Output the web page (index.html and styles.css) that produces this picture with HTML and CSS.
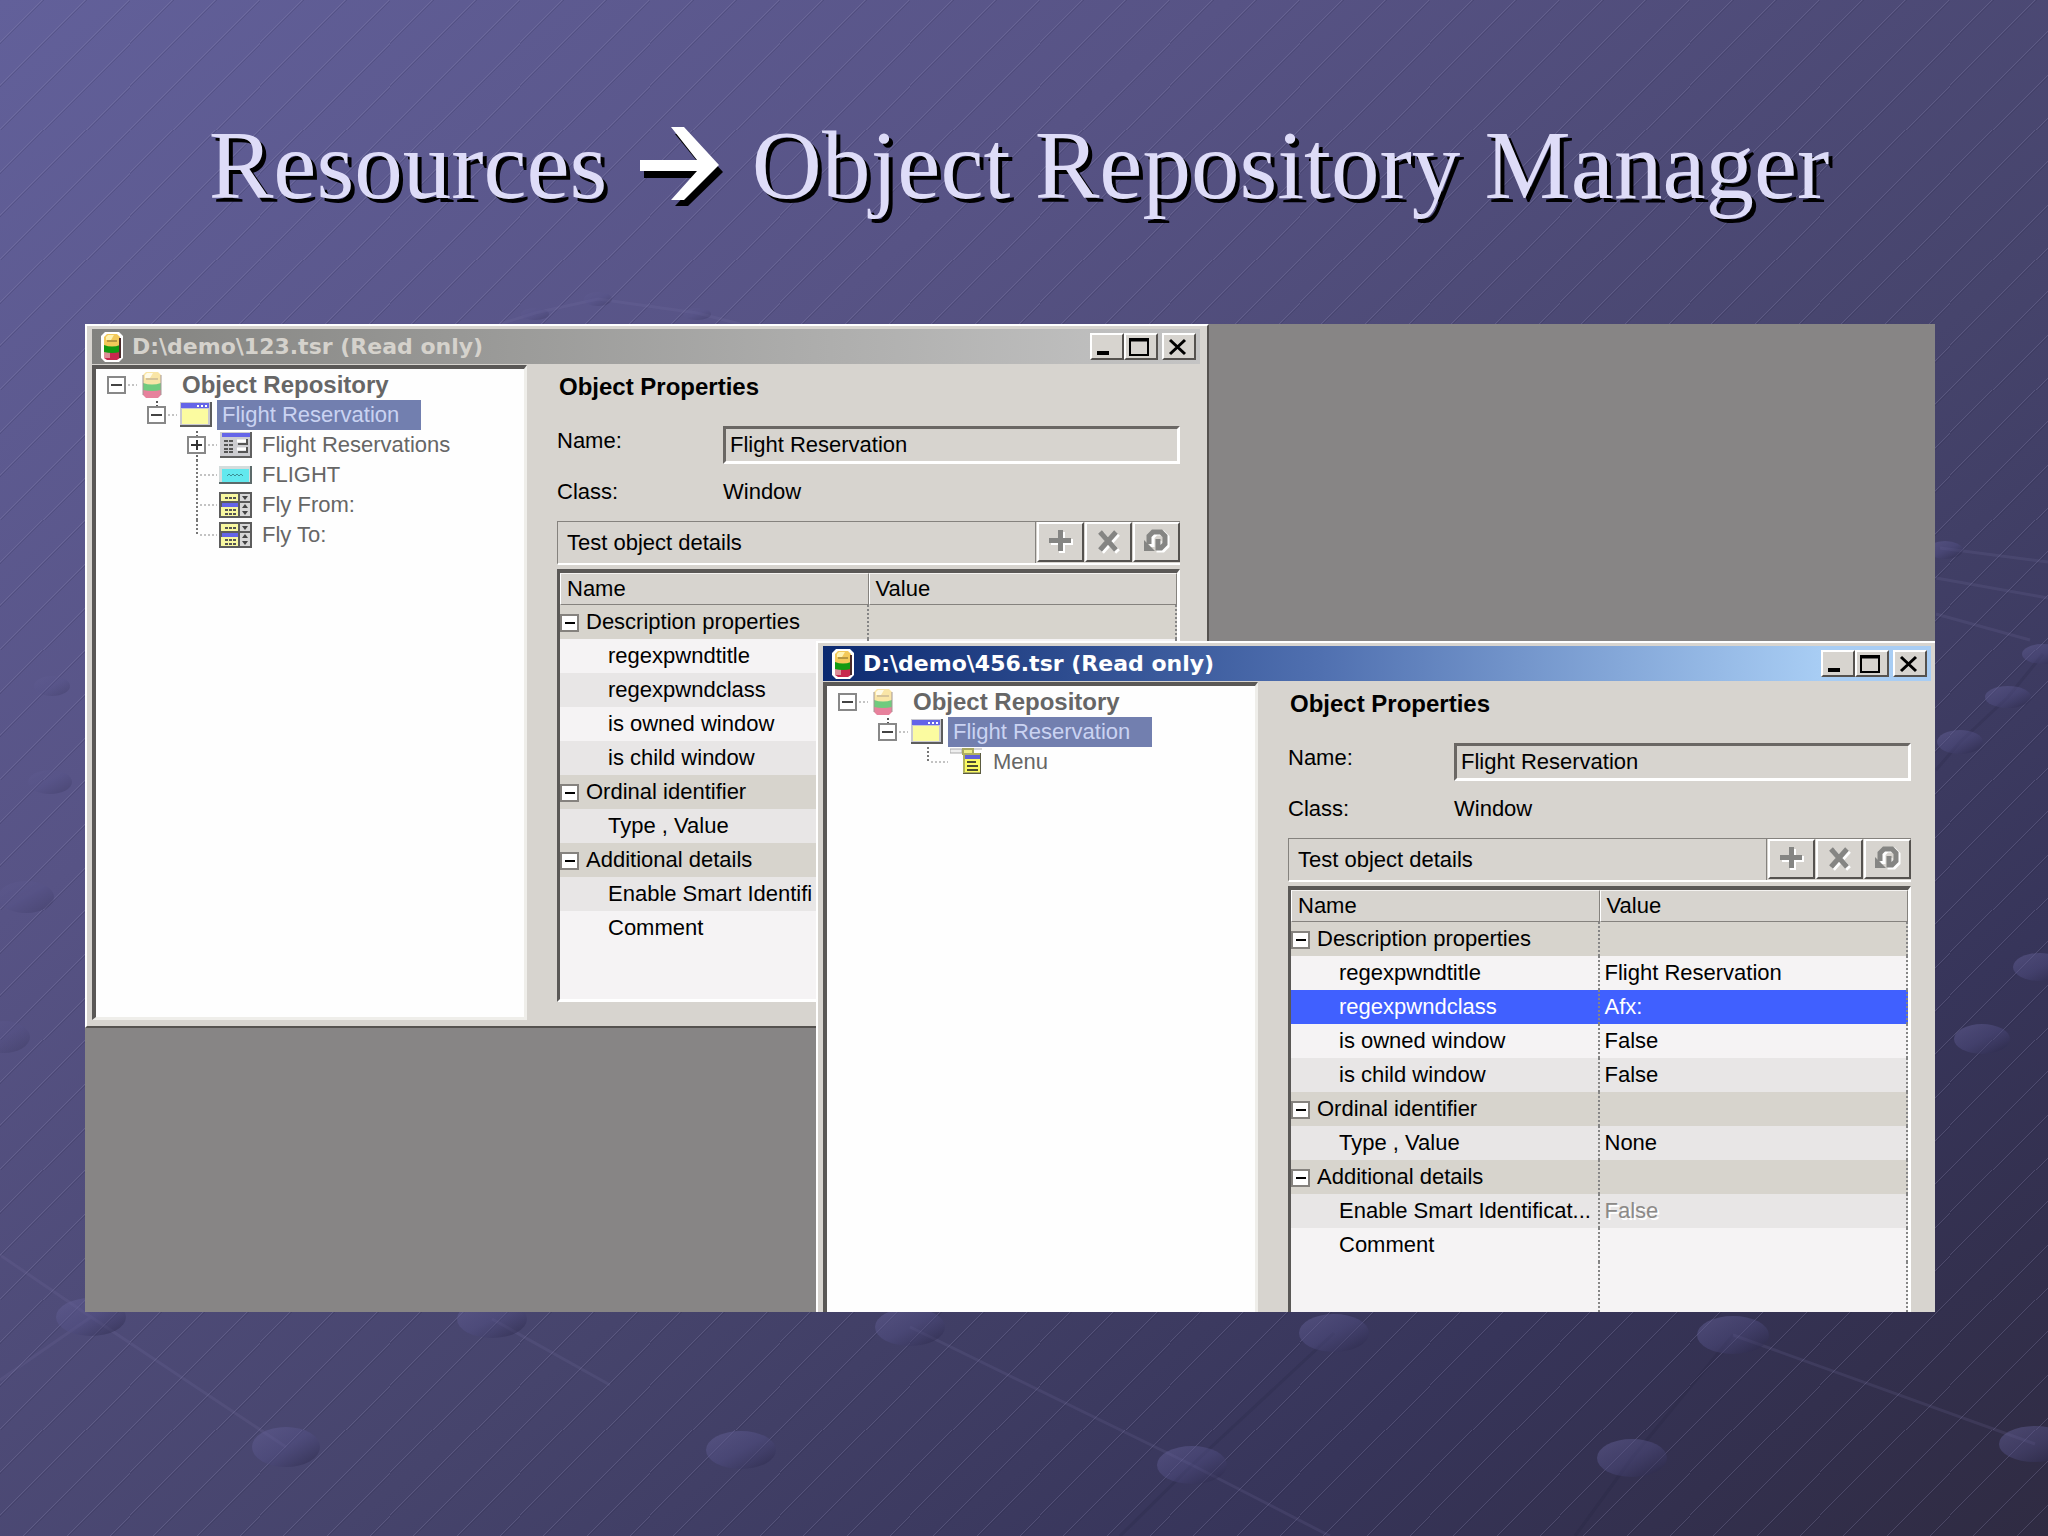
FILE: index.html
```
<!DOCTYPE html>
<html lang="en">
<head>
<meta charset="utf-8">
<title>Resources: Object Repository Manager</title>
<link rel="stylesheet" href="styles.css">
</head>
<body>
<svg class="backdrop" viewBox="0 0 2048 1536" preserveAspectRatio="xMidYMid slice" aria-hidden="true">
  <defs>
    <pattern id="hatch" width="130" height="130" patternUnits="userSpaceOnUse">
      <path d="M-1 43L43 -1M-1 86L86 -1M-1 130L130 -1M42 131L131 42M85 131L131 85M128 131L131 128" stroke="#8f8bb4" stroke-opacity=".28" fill="none"/>
      <path d="M-1 45L45 -1M-1 88L88 -1M1 130L130 1M44 131L131 44M87 131L131 87" stroke="#1c1a38" stroke-opacity=".15" fill="none"/>
    </pattern>
    <linearGradient id="ball" x1="0" y1="0" x2="1" y2="1">
      <stop offset="0" stop-color="#6a669c" stop-opacity=".5"/>
      <stop offset=".5" stop-color="#55528a" stop-opacity=".4"/>
      <stop offset="1" stop-color="#1f1d38" stop-opacity=".5"/>
    </linearGradient>
  </defs>
  <rect width="2048" height="1536" fill="url(#hatch)"/>
  <g stroke="#7a76a8" stroke-opacity=".16" stroke-width="3" fill="none">
    <path d="M0 1255L91 1317L286 1447M91 1317L0 1380M910 1327L1192 1465L1330 1536M492 1319L610 1385M1733 1335L2035 1444M500 324L535 313L598 299L697 313L740 324M1940 548L2048 562M1936 578L2048 598M1936 614L2030 640"/>
    <path d="M1334 1333L1192 1465L1120 1536M1733 1335L1632 1458L1575 1536M2043 654L2008 697L1960 742L1936 770" stroke="#1f1d38"/>
  </g>
  <g fill="url(#ball)">
    <ellipse cx="91" cy="1317" rx="35" ry="19"/><ellipse cx="492" cy="1319" rx="35" ry="19"/>
    <ellipse cx="910" cy="1327" rx="35" ry="19"/><ellipse cx="1334" cy="1333" rx="35" ry="19"/>
    <ellipse cx="1733" cy="1335" rx="36" ry="19"/><ellipse cx="286" cy="1447" rx="34" ry="20"/>
    <ellipse cx="741" cy="1450" rx="35" ry="19"/><ellipse cx="1192" cy="1465" rx="35" ry="19"/>
    <ellipse cx="1632" cy="1458" rx="35" ry="19"/><ellipse cx="2035" cy="1444" rx="36" ry="18"/>
    <ellipse cx="1982" cy="1039" rx="28" ry="15"/><ellipse cx="2040" cy="967" rx="27" ry="14"/>
    <ellipse cx="1960" cy="742" rx="23" ry="12"/><ellipse cx="2008" cy="697" rx="23" ry="11"/>
    <ellipse cx="2043" cy="654" rx="21" ry="10"/><ellipse cx="1945" cy="550" rx="18" ry="9"/>
    <g opacity=".5">
      <ellipse cx="4" cy="1037" rx="26" ry="16"/><ellipse cx="26" cy="897" rx="28" ry="16"/>
      <ellipse cx="50" cy="782" rx="22" ry="12"/><ellipse cx="52" cy="686" rx="18" ry="10"/>
      <ellipse cx="598" cy="299" rx="14" ry="7"/><ellipse cx="535" cy="314" rx="14" ry="6"/><ellipse cx="697" cy="314" rx="14" ry="6"/>
    </g>
  </g>
</svg>

<svg class="sprite" aria-hidden="true">
  <symbol id="db" viewBox="0 0 24 30">
    <path d="M5 0H19L23 4V26L19 30H5L1 26V4Z" fill="#fff"/>
    <path d="M4 18H20V26L17 28H7L4 26Z" fill="#c8284f"/><path d="M4 20H10V26H4Z" fill="#dd8f98"/>
    <path d="M4 12H20V20Q12 22 4 20Z" fill="#129a12"/>
    <path d="M4 5L7 2H17L20 5V13Q12 16 4 13Z" fill="#f3c95a"/><path d="M6 5L8 3H14L11 8H6Z" fill="#fff2b0"/>
    <path d="M7 9H17" stroke="#7d6528" stroke-width="1"/><path d="M20 6V26" stroke="#4b2a2a" stroke-width="2"/>
  </symbol>
  <symbol id="db-node" viewBox="0 0 33 30">
    <g opacity=".65"><path d="M4 18H22V25L19 28H7L4 25Z" fill="#dc3f68"/><path d="M4 12H22V20Q13 22 4 20Z" fill="#25b13b"/>
    <path d="M4 5L7 2H19L22 5V13Q13 16 4 13Z" fill="#f7d878"/><path d="M6 5L8 3H14L11 8H6Z" fill="#fff9dc"/>
    <path d="M7 9H19" stroke="#8b7550" stroke-width="1"/><path d="M22 5V25M4 5V25" stroke="#74635f" stroke-width="1"/></g>
  </symbol>
  <symbol id="win" viewBox="0 0 33 30">
    <path d="M1 2H33V27H1Z" fill="#5d5d5d"/><path d="M1 2H31V25H1Z" fill="#c8c8d0"/><path d="M2 3H30V8H2Z" fill="#6464e8"/>
    <path d="M18 6H20M22 6H24M26 6H28" stroke="#fff" stroke-width="2"/><path d="M3 9H29V24H3Z" fill="#fbfba0"/>
  </symbol>
  <symbol id="dialog" viewBox="0 0 33 30">
    <path d="M1 2H33V28H1Z" fill="#606060"/><path d="M1 2H31V26H1Z" fill="#ccccd0"/><path d="M3 3H31V7H3Z" fill="#6464e8"/>
    <path d="M5 11H14M5 15H14M5 19H14M5 22H14" stroke="#555" stroke-width="2" stroke-dasharray="4 1"/>
    <path d="M18 11H27M18 19H27" stroke="#fff" stroke-width="3"/><path d="M19 14H28V9M19 22H28V17" stroke="#555" stroke-width="2" fill="none"/>
  </symbol>
  <symbol id="btn" viewBox="0 0 33 30">
    <path d="M0 6H33V24H0Z" fill="#5c6a6a"/><path d="M0 6H31V22H0Z" fill="#d4dcdc"/><path d="M3 9H30V22H3Z" fill="#62e8ee"/>
    <path d="M8 16L10 14L12 16L14 14L16 16L18 14L20 16L22 14L24 16" stroke="#3c8f94" stroke-width="1" fill="none"/>
  </symbol>
  <symbol id="combo" viewBox="0 0 33 30">
    <path d="M0 2H33V28H0Z" fill="#5c5c5c"/><path d="M2 4H19V11H2Z" fill="#f8f8a0"/><path d="M21 4H31V11H21Z" fill="#d8d8d8"/>
    <path d="M3 13H19V17H3Z" fill="#6464e8"/><path d="M2 17H19V26H2Z" fill="#f8f8a0"/><path d="M21 13H31V26H21Z" fill="#d8d8d8"/>
    <path d="M6 8H17M6 20H17M6 24H17" stroke="#555" stroke-width="2" stroke-dasharray="3 1"/>
    <path d="M23 6H29L26 10ZM23 18L26 14L29 18ZM23 21H29L26 25Z" fill="#444"/>
  </symbol>
  <symbol id="menu" viewBox="0 0 33 30">
    <path d="M0 2H12V6H0ZM24 2H32" fill="#eee" stroke="#aaa" stroke-width="1"/><path d="M13 2H23V7H13Z" fill="#eeee88" stroke="#a8a860" stroke-width="2"/>
    <path d="M13 6H31V27H13Z" fill="#5b5b40"/><path d="M13 6H30V26H13Z" fill="#b0b060"/><path d="M15 8H30V25H15Z" fill="#fbfb62"/>
    <path d="M15 8H30V12H15Z" fill="#6060d8"/><path d="M17 15H26M17 19H28M17 23H28" stroke="#4c4c30" stroke-width="2"/>
  </symbol>
  <symbol id="minus" viewBox="0 0 32 30"><path d="M1 7H18V23H1Z" fill="#fff" stroke="#888" stroke-width="2"/><path d="M4 15H15" stroke="#444" stroke-width="2"/><path d="M21 15H30" stroke="#888" stroke-width="1" stroke-dasharray="2 2"/></symbol>
  <symbol id="minus-child" viewBox="0 0 32 30"><path d="M10 1V6" stroke="#555" stroke-width="2" stroke-dasharray="2 2"/><path d="M1 7H18V23H1Z" fill="#fff" stroke="#888" stroke-width="2"/><path d="M4 15H15" stroke="#444" stroke-width="2"/><path d="M21 15H30" stroke="#888" stroke-width="1" stroke-dasharray="2 2"/></symbol>
  <symbol id="plus" viewBox="0 0 32 30"><path d="M10 1V30" stroke="#666" stroke-width="2" stroke-dasharray="2 2"/><path d="M1 7H18V23H1Z" fill="#fff" stroke="#888" stroke-width="2"/><path d="M4 15H15M10 10V20" stroke="#333" stroke-width="2"/><path d="M21 15H30" stroke="#888" stroke-width="1" stroke-dasharray="2 2"/></symbol>
  <symbol id="tee" viewBox="0 0 32 30"><path d="M10 0V30" stroke="#777" stroke-width="2" stroke-dasharray="2 2"/><path d="M13 15H30" stroke="#888" stroke-width="1" stroke-dasharray="2 2"/></symbol>
  <symbol id="elbow" viewBox="0 0 32 30"><path d="M10 0V16" stroke="#777" stroke-width="2" stroke-dasharray="2 2"/><path d="M13 15H30" stroke="#888" stroke-width="1" stroke-dasharray="2 2"/></symbol>
  <symbol id="add" viewBox="0 0 28 28"><path d="M12 4H18V11H26V17H18V25H12V17H4V11H12Z" fill="#fff"/><path d="M11 2H16V10H24V15H16V23H11V15H2V10H11Z" fill="#858583"/></symbol>
  <symbol id="remove" viewBox="0 0 28 28"><path d="M7 6L23 24M23 6L7 24" stroke="#fff" stroke-width="5"/><path d="M5 4L21 22M21 4L5 22" stroke="#858583" stroke-width="5"/></symbol>
  <symbol id="reset" viewBox="0 0 28 28"><path d="M9 19V9L13 5H20L24 9V18L20 22H16V13" fill="none" stroke="#fff" stroke-width="5"/><path d="M6 16V8L10 4H18L22 8V16L18 20H15V11" stroke="#858583" stroke-width="5" fill="none"/><path d="M1 12L12 23H1Z" fill="#858583"/></symbol>
</svg>

<main class="slide">
  <h1 class="title">Resources
    <svg class="arrow" viewBox="0 0 84 80" role="img" aria-label="to"><path d="M4 39H61L35 7H48L83 45L48 79H35L61 51H4Z" fill="#000"/><path d="M0 33H57L31 0H44L79 38L44 73H31L57 44H0Z" fill="#fff"/></svg>
    Object Repository Manager</h1>

  <div class="desktop">
    <section class="window window-back">
      <header class="titlebar">
        <svg class="app-icon"><use href="#db"/></svg>
        <h2 class="caption">D:\demo\123.tsr (Read only)</h2>
        <button class="sys" aria-label="Minimize"><svg viewBox="0 0 28 20"><path d="M5 16H17" stroke="#000" stroke-width="4"/></svg></button>
        <button class="sys" aria-label="Maximize"><svg viewBox="0 0 28 20"><path d="M4 2H22V18H4Z" fill="none" stroke="#000" stroke-width="2"/><path d="M4 3H22" stroke="#000" stroke-width="3"/></svg></button>
        <button class="sys sys-close" aria-label="Close"><svg viewBox="0 0 28 20"><path d="M6 3L21 17M21 3L6 17" stroke="#000" stroke-width="3"/></svg></button>
      </header>
      <div class="panes">
        <ul class="tree">
          <li class="node"><button class="toggle" aria-label="Collapse"><svg class="branch"><use href="#minus"/></svg></button><svg class="kind"><use href="#db-node"/></svg><span class="label root">Object Repository</span></li>
          <li class="node depth-1"><button class="toggle" aria-label="Collapse"><svg class="branch"><use href="#minus-child"/></svg></button><svg class="kind"><use href="#win"/></svg><span class="label chosen">Flight Reservation</span></li>
          <li class="node depth-2"><button class="toggle" aria-label="Expand"><svg class="branch"><use href="#plus"/></svg></button><svg class="kind"><use href="#dialog"/></svg><span class="label">Flight Reservations</span></li>
          <li class="node depth-2"><svg class="branch"><use href="#tee"/></svg><svg class="kind"><use href="#btn"/></svg><span class="label">FLIGHT</span></li>
          <li class="node depth-2"><svg class="branch"><use href="#tee"/></svg><svg class="kind"><use href="#combo"/></svg><span class="label">Fly From:</span></li>
          <li class="node depth-2"><svg class="branch"><use href="#elbow"/></svg><svg class="kind"><use href="#combo"/></svg><span class="label">Fly To:</span></li>
        </ul>
        <div class="props">
          <h3 class="heading">Object Properties</h3>
          <div class="fields">
            <label class="field-label" for="name-a">Name:</label>
            <input class="field-input" id="name-a" value="Flight Reservation" readonly>
            <span class="field-label">Class:</span>
            <span class="field-value">Window</span>
          </div>
          <div class="toolbar">
            <span class="toolbar-title">Test object details</span>
            <button class="tool" aria-label="Add"><svg><use href="#add"/></svg></button>
            <button class="tool" aria-label="Remove"><svg><use href="#remove"/></svg></button>
            <button class="tool" aria-label="Reset"><svg><use href="#reset"/></svg></button>
          </div>
          <div class="grid">
            <table class="details">
              <thead><tr><th>Name</th><th>Value</th></tr></thead>
              <tbody>
                <tr class="group"><td><button class="fold" aria-label="Collapse"></button>Description properties</td><td></td></tr>
                <tr class="light"><td>regexpwndtitle</td><td></td></tr>
                <tr><td>regexpwndclass</td><td></td></tr>
                <tr class="light"><td>is owned window</td><td></td></tr>
                <tr><td>is child window</td><td></td></tr>
                <tr class="group"><td><button class="fold" aria-label="Collapse"></button>Ordinal identifier</td><td></td></tr>
                <tr><td>Type , Value</td><td></td></tr>
                <tr class="group"><td><button class="fold" aria-label="Collapse"></button>Additional details</td><td></td></tr>
                <tr><td>Enable Smart Identifi</td><td></td></tr>
                <tr class="light"><td>Comment</td><td></td></tr>
                <tr class="light rest"><td></td><td></td></tr>
              </tbody>
            </table>
          </div>
        </div>
      </div>
    </section>

    <section class="window window-front">
      <header class="titlebar active">
        <svg class="app-icon"><use href="#db"/></svg>
        <h2 class="caption">D:\demo\456.tsr (Read only)</h2>
        <button class="sys" aria-label="Minimize"><svg viewBox="0 0 28 20"><path d="M5 16H17" stroke="#000" stroke-width="4"/></svg></button>
        <button class="sys" aria-label="Maximize"><svg viewBox="0 0 28 20"><path d="M4 2H22V18H4Z" fill="none" stroke="#000" stroke-width="2"/><path d="M4 3H22" stroke="#000" stroke-width="3"/></svg></button>
        <button class="sys sys-close" aria-label="Close"><svg viewBox="0 0 28 20"><path d="M6 3L21 17M21 3L6 17" stroke="#000" stroke-width="3"/></svg></button>
      </header>
      <div class="panes">
        <ul class="tree">
          <li class="node"><button class="toggle" aria-label="Collapse"><svg class="branch"><use href="#minus"/></svg></button><svg class="kind"><use href="#db-node"/></svg><span class="label root">Object Repository</span></li>
          <li class="node depth-1"><button class="toggle" aria-label="Collapse"><svg class="branch"><use href="#minus-child"/></svg></button><svg class="kind"><use href="#win"/></svg><span class="label chosen">Flight Reservation</span></li>
          <li class="node depth-2"><svg class="branch"><use href="#elbow"/></svg><svg class="kind"><use href="#menu"/></svg><span class="label">Menu</span></li>
        </ul>
        <div class="props">
          <h3 class="heading">Object Properties</h3>
          <div class="fields">
            <label class="field-label" for="name-b">Name:</label>
            <input class="field-input" id="name-b" value="Flight Reservation" readonly>
            <span class="field-label">Class:</span>
            <span class="field-value">Window</span>
          </div>
          <div class="toolbar">
            <span class="toolbar-title">Test object details</span>
            <button class="tool" aria-label="Add"><svg><use href="#add"/></svg></button>
            <button class="tool" aria-label="Remove"><svg><use href="#remove"/></svg></button>
            <button class="tool" aria-label="Reset"><svg><use href="#reset"/></svg></button>
          </div>
          <div class="grid">
            <table class="details">
              <thead><tr><th>Name</th><th>Value</th></tr></thead>
              <tbody>
                <tr class="group"><td><button class="fold" aria-label="Collapse"></button>Description properties</td><td></td></tr>
                <tr class="light"><td>regexpwndtitle</td><td>Flight Reservation</td></tr>
                <tr class="current"><td>regexpwndclass</td><td>Afx:</td></tr>
                <tr class="light"><td>is owned window</td><td>False</td></tr>
                <tr><td>is child window</td><td>False</td></tr>
                <tr class="group"><td><button class="fold" aria-label="Collapse"></button>Ordinal identifier</td><td></td></tr>
                <tr><td>Type , Value</td><td>None</td></tr>
                <tr class="group"><td><button class="fold" aria-label="Collapse"></button>Additional details</td><td></td></tr>
                <tr><td>Enable Smart Identificat...</td><td class="off">False</td></tr>
                <tr class="light"><td>Comment</td><td></td></tr>
                <tr class="light rest"><td></td><td></td></tr>
              </tbody>
            </table>
          </div>
        </div>
      </div>
    </section>
  </div>
</main>
</body>
</html>
```
FILE: styles.css
```
* { box-sizing: border-box; }

body {
  margin: 0;
  background: linear-gradient(to bottom right, #62609a, #575385 30%, #46446c 58%, #37355a 80%, #2f2b42);
  font: 22px/30px "Liberation Sans", Arial, sans-serif;
  color: #000;
}

button, input { font: inherit; color: inherit; }
button { padding: 0; border: 0; background: none; }

.backdrop { position: absolute; inset: 0; width: 100%; height: 100%; }
.sprite { position: absolute; width: 0; height: 0; }

.slide {
  position: relative;
  display: flex;
  flex-direction: column;
  min-height: 100vh;
  padding: 110px 113px 224px 85px;
}

.title {
  margin: 0 0 102px;
  padding-left: 18px;
  font: 97px/112px "Liberation Serif", "Times New Roman", serif;
  color: #dedcf8;
  text-align: center;
  text-shadow: 4px 4px 0 #000;
}
.arrow { width: 84px; height: 80px; margin: 0 4px 0 8px; vertical-align: -9px; }

.desktop {
  position: relative;
  flex: 1;
  min-height: 720px;
  background: #878585;
  overflow: hidden;
}

.window {
  position: absolute;
  display: flex;
  flex-direction: column;
  width: 1124px;
  height: 704px;
  padding: 3px 7px 6px 5px;
  background: #d7d4cf;
  border: 2px solid;
  border-color: #fff #55524f #55524f #fff;
}
.window-back { left: 0; top: 0; }
.window-front { left: 731px; top: 317px; }

.titlebar {
  display: flex;
  align-items: center;
  height: 35px;
  padding: 0 4px 0 8px;
  background: linear-gradient(to right, #82827f, #c4c4c4);
  color: #d5d2cc;
}
.titlebar.active { background: linear-gradient(to right, #0c2a70, #5070b0 45%, #a8cdf4 90%); color: #fff; }
.app-icon { width: 24px; height: 30px; margin-right: 8px; }
.caption {
  flex: 1;
  margin: 0;
  font: bold 22px/30px "DejaVu Sans", Verdana, sans-serif;
  white-space: nowrap;
}
.sys {
  width: 34px;
  height: 27px;
  background: #d7d4cf;
  border: 2px solid;
  border-color: #fff #55524f #55524f #fff;
}
.sys svg { display: block; width: 28px; height: 20px; }
.sys-close { margin-left: 4px; }

.panes { display: flex; flex: 1; min-height: 0; padding-top: 1px; }

.tree {
  flex: none;
  width: 435px;
  margin: 0;
  padding: 1px 0 0 11px;
  list-style: none;
  background: #fefefe;
  border: 4px solid;
  border-color: #5a5856 #efeeea #efeeea #5a5856;
  border-width: 4px 3px 3px 4px;
  color: #666;
}
.node { display: flex; height: 30px; }
.depth-1 { padding-left: 40px; }
.depth-2 { padding-left: 80px; }
.toggle { display: flex; }
.branch { width: 32px; height: 30px; }
.kind { width: 33px; height: 30px; margin-right: 5px; }
.label { padding: 0 5px; white-space: nowrap; }
.root { font-size: 24px; font-weight: bold; }
.chosen { padding-right: 22px; background: #727faf; color: #cad3f2; }

.props { flex: 1; padding: 7px 20px 18px 30px; }
.heading { margin: 0 0 24px; padding-left: 2px; font-size: 24px; line-height: 30px; }

.fields {
  display: grid;
  grid-template-columns: 166px 1fr;
  row-gap: 13px;
  margin-bottom: 14px;
}
.field-label { line-height: 30px; }
.field-input {
  width: 100%;
  height: 38px;
  padding: 0 4px;
  background: #d7d4cf;
  border: 3px solid;
  border-color: #6a6764 #fff #fff #6a6764;
  border-radius: 0;
}
.field-value { line-height: 30px; }

.toolbar {
  display: flex;
  gap: 1px;
  height: 44px;
  margin-bottom: 4px;
  border-top: 1px solid #85827e;
  border-left: 1px solid #85827e;
  border-bottom: 2px solid #fff;
}
.toolbar-title { flex: 1; padding-left: 9px; line-height: 42px; border-right: 1px solid #85827e; }
.tool {
  width: 47px;
  height: 40px;
  border: 2px solid;
  border-color: #fff #55524f #55524f #fff;
}
.tool svg { display: block; width: 28px; height: 28px; margin: auto; }

.grid {
  border: 3px solid;
  border-color: #5a5856 #fff #fff #5a5856;
  border-top-width: 4px;
  background: #f4f2f5;
}
.details { width: 100%; table-layout: fixed; border-spacing: 0; }
.details th {
  height: 32px;
  padding: 0 0 0 6px;
  background: #d7d4cf;
  border: 1px solid;
  border-color: #f4f2f0 #85827e #85827e #fff;
  font-weight: normal;
  text-align: left;
}
.details td {
  height: 34px;
  padding: 0;
  background: #e8e6e6;
  border-right: 2px dotted #858585;
  white-space: nowrap;
}
.details td:first-child { padding-left: 48px; }
.details td:last-child { padding-left: 5px; }
.details .light td { background: #f5f3f4; }
.details .group td { background: #d7d4cd; }
.details .group td:first-child { padding-left: 0; }
.details .current td { background: #4060ff; color: #fff; }
.details .rest td { height: 54px; }
.details .off { color: #8c8a88; text-shadow: 2px 2px 0 #fff; }
.fold {
  width: 19px;
  height: 18px;
  margin-right: 7px;
  background: linear-gradient(#000, #000) center / 10px 2px no-repeat #fff;
  border: 2px solid #85827e;
  vertical-align: -1px;
}
```
